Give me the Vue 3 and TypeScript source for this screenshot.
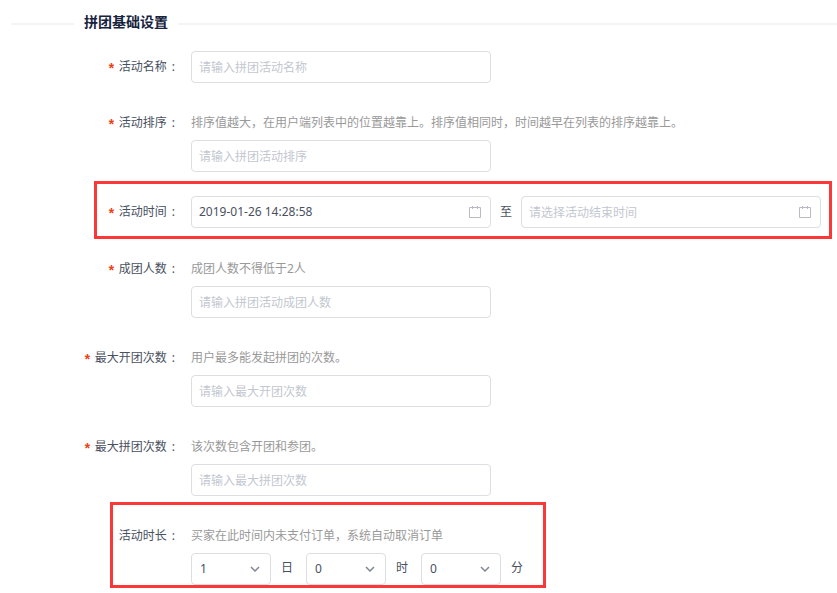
<script setup lang="ts">
import { reactive } from 'vue'

interface TextField {
  key: 'name' | 'sort' | 'groupSize' | 'maxOpen' | 'maxJoin'
  label: string
  hint?: string
  placeholder: string
}

const form = reactive({
  name: '',
  sort: '',
  start: '2019-01-26 14:28:58',
  end: '',
  groupSize: '',
  maxOpen: '',
  maxJoin: '',
  days: 1,
  hours: 0,
  minutes: 0,
})

const basicFields: TextField[] = [
  { key: 'name', label: '活动名称', placeholder: '请输入拼团活动名称' },
  {
    key: 'sort',
    label: '活动排序',
    hint: '排序值越大，在用户端列表中的位置越靠上。排序值相同时，时间越早在列表的排序越靠上。',
    placeholder: '请输入拼团活动排序',
  },
]

const limitFields: TextField[] = [
  { key: 'groupSize', label: '成团人数', hint: '成团人数不得低于2人', placeholder: '请输入拼团活动成团人数' },
  { key: 'maxOpen', label: '最大开团次数', hint: '用户最多能发起拼团的次数。', placeholder: '请输入最大开团次数' },
  { key: 'maxJoin', label: '最大拼团次数', hint: '该次数包含开团和参团。', placeholder: '请输入最大拼团次数' },
]

const pickers: { key: 'start' | 'end'; label: string; placeholder: string }[] = [
  { key: 'start', label: '活动开始时间', placeholder: '请选择活动开始时间' },
  { key: 'end', label: '活动结束时间', placeholder: '请选择活动结束时间' },
]

const durations: { key: 'days' | 'hours' | 'minutes'; unit: string; count: number }[] = [
  { key: 'days', unit: '日', count: 31 },
  { key: 'hours', unit: '时', count: 24 },
  { key: 'minutes', unit: '分', count: 60 },
]
</script>

<template>
  <form class="settings" @submit.prevent>
    <h2 class="heading">拼团基础设置</h2>

    <div v-for="field in basicFields" :key="field.key" class="item">
      <label class="label required" :for="field.key">{{ field.label }}</label>
      <div class="content">
        <p v-if="field.hint" class="hint">{{ field.hint }}</p>
        <input :id="field.key" v-model="form[field.key]" class="control" type="text" :placeholder="field.placeholder" />
      </div>
    </div>

    <div class="item marked-time">
      <label class="label required" for="start">活动时间</label>
      <div class="content range">
        <template v-for="(picker, i) in pickers" :key="picker.key">
          <span v-if="i > 0">至</span>
          <div class="picker">
            <input
              :id="picker.key"
              v-model="form[picker.key]"
              class="control"
              type="text"
              :aria-label="picker.label"
              :placeholder="picker.placeholder"
            />
            <svg class="calendar" viewBox="0 0 14 14" aria-hidden="true">
              <path d="M1.5 2.5h11v10h-11zM4.5 1v3M9.5 1v3" />
            </svg>
          </div>
        </template>
      </div>
    </div>

    <div v-for="field in limitFields" :key="field.key" class="item">
      <label class="label required" :for="field.key">{{ field.label }}</label>
      <div class="content">
        <p class="hint">{{ field.hint }}</p>
        <input :id="field.key" v-model="form[field.key]" class="control" type="text" :placeholder="field.placeholder" />
      </div>
    </div>

    <div class="item marked-duration">
      <label class="label" for="days">活动时长</label>
      <div class="content">
        <p class="hint">买家在此时间内未支付订单，系统自动取消订单</p>
        <div class="durations">
          <div v-for="part in durations" :key="part.key" class="duration">
            <div class="select">
              <select :id="part.key" v-model="form[part.key]" class="control" :aria-label="part.unit">
                <option v-for="n in part.count" :key="n" :value="n - 1">{{ n - 1 }}</option>
              </select>
              <svg class="chevron" viewBox="0 0 10 6" aria-hidden="true">
                <path d="M1 1l4 4 4-4" />
              </svg>
            </div>
            <span>{{ part.unit }}</span>
          </div>
        </div>
      </div>
    </div>
  </form>
</template>

<style>
body {
  margin: 0;
  background: #fff;
}
</style>

<style scoped>
.settings {
  padding: 10px 0 8px;
  color: #495060;
  font-family: "Noto Sans", "Noto Sans CJK SC", sans-serif;
  font-size: 12px;
  line-height: 32px;
}

.heading {
  display: flex;
  align-items: center;
  gap: 10px;
  margin: 0 0 17px 11px;
  color: #17233d;
  font-size: 14px;
  font-weight: 700;
  line-height: 24px;
}

.heading::before,
.heading::after {
  content: "";
  height: 2px;
  margin-top: 4px;
  background: #f4f4f4;
}

.heading::before {
  flex: 0 0 63px;
}

.heading::after {
  flex: 1;
}

.item {
  position: relative;
  display: flex;
  align-items: flex-start;
  margin-bottom: 24px;
}

.label {
  flex: 0 0 175px;
  margin-right: 16px;
  text-align: right;
}

.label::after {
  content: ":";
  margin-left: 5px;
}

.required::before {
  content: "*";
  margin-right: 3px;
  color: #ed3f14;
  font-family: "Liberation Mono", monospace;
  font-size: 14px;
  font-weight: 700;
  line-height: 1;
  vertical-align: -3px;
}

.content {
  flex: 1;
  min-width: 0;
}

.hint {
  margin: 0;
  padding-bottom: 1px;
  color: #999;
}

.control {
  display: block;
  box-sizing: border-box;
  width: 300px;
  height: 32px;
  margin: 0;
  padding: 0 7px;
  border: 1px solid #dddee1;
  border-radius: 4px;
  outline: none;
  background: #fff;
  color: #495060;
  font: inherit;
}

.control:focus {
  border-color: #57a3f3;
}

.control:placeholder-shown {
  padding-top: 2px;
}

.control::placeholder {
  color: #c3c7d0;
  opacity: 1;
}

.range {
  display: flex;
  gap: 9px;
  padding-bottom: 1px;
}

.picker,
.select {
  position: relative;
}

.calendar {
  position: absolute;
  top: 9px;
  right: 9px;
  width: 14px;
  height: 14px;
  fill: none;
  stroke: #b9bac2;
  stroke-width: 1;
  pointer-events: none;
}

.durations,
.duration {
  display: flex;
}

.durations {
  gap: 13px;
}

.duration {
  gap: 10px;
  line-height: 30px;
}

.select .control {
  width: 80px;
  padding: 0 8px;
  appearance: none;
}

.chevron {
  position: absolute;
  top: 13px;
  right: 11px;
  width: 10px;
  height: 6px;
  fill: none;
  stroke: #808695;
  stroke-width: 1.5;
  pointer-events: none;
}

.marked-time::after,
.marked-duration::after {
  content: "";
  position: absolute;
  border: 3px solid #fc3737;
  pointer-events: none;
}

.marked-time::after {
  inset: -15px 5px -10px 94px;
}

.marked-duration {
  width: 546px;
  margin-bottom: 0;
}

.marked-duration::after {
  inset: -18px 0 -3px 110px;
}
</style>
